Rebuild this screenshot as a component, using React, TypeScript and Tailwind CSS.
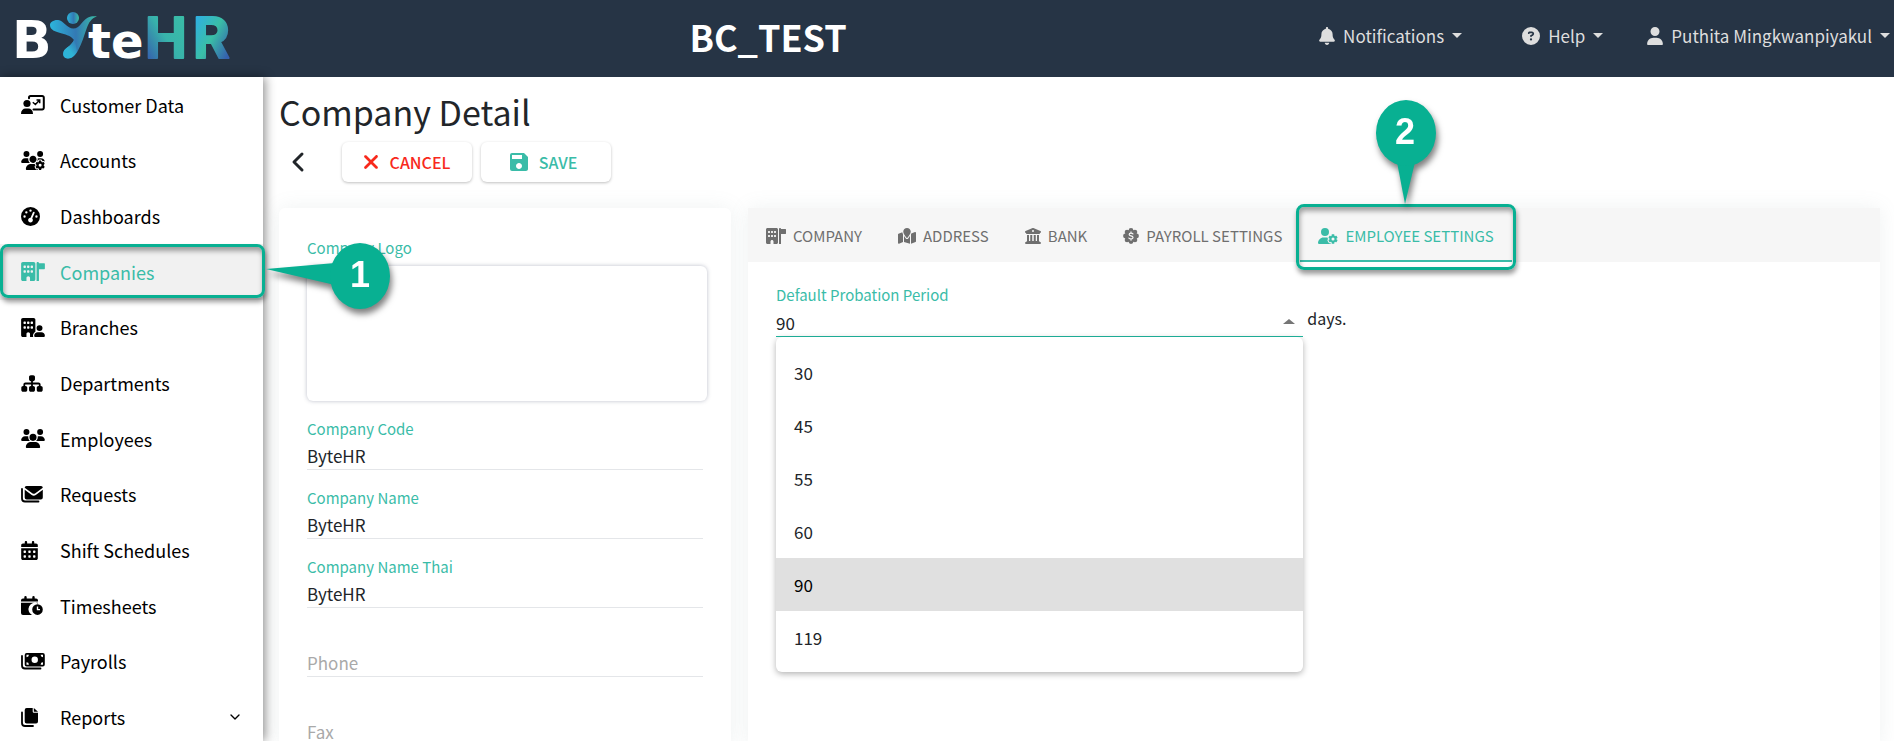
import { useState } from "react";
import type { ReactNode } from "react";
import {
    FaBell,
    FaBuildingColumns,
    FaBuildingFlag,
    FaBuildingUser,
    FaCalendarDays,
    FaCircleQuestion,
    FaGaugeHigh,
    FaMapLocation,
    FaSitemap,
    FaUser,
    FaUserGear,
    FaUsers,
    FaUsersGear,
    FaXmark
} from "react-icons/fa6";
import { MdSave } from "react-icons/md";
import { ChevronDown, ChevronLeft } from "lucide-react";

const navIcon = "h-[19px] w-auto";
const wideNavIcon = "h-[19px] w-6";
const tabIcon = "h-4 w-auto";
const wideTabIcon = "h-4 w-5";

function CustomerIcon() {
    return (
        <svg viewBox="0 0 24 19" className={navIcon} fill="currentColor">
            <path d="M8 3.2V2.6A1.6 1.6 0 0 1 9.600 1H21.200A1.600 1.600 0 0 1 22.800 2.600V12.800A1.600 1.600 0 0 1 21.200 14.400H12.500" fill="none" stroke="currentColor" strokeWidth="2" strokeLinecap="round" />
            <circle cx="6" cy="8.500" r="3.600" />
            <path d="M0 19c0-3.500 2-5.400 4.600-5.400h2.800c2.600 0 4.600 1.900 4.600 5.400z" />
            <path d="M11.800 7.200l2.600 2.300 3.800-4M15.500 5h3.200v3.200" fill="none" stroke="currentColor" strokeWidth="1.500" />
        </svg>
    );
}

function RequestsIcon() {
    return (
        <svg viewBox="0 0 22 19" className={navIcon} fill="currentColor">
            <path d="M1 4v9.500a3 3 0 0 0 3 3h13.500" fill="none" stroke="currentColor" strokeWidth="1.800" strokeLinecap="round" />
            <path d="M5.500 1h14.500a1.800 1.800 0 0 1 1.800 1.800l-7.800 5.600a2 2 0 0 1-2.400 0L3.700 2.800A1.800 1.800 0 0 1 5.500 1z" />
            <path d="M3.700 4.800l7 5.100a3.400 3.400 0 0 0 4.100 0l7-5.100v7.700a2 2 0 0 1-2 2H5.700a2 2 0 0 1-2-2z" />
        </svg>
    );
}

function TimesheetIcon() {
    return (
        <svg viewBox="0 0 22 19" className={navIcon} fill="currentColor">
            <path d="M3.300 1.200a1.200 1.200 0 0 1 2.400 0v1.200h5.600V1.200a1.200 1.200 0 0 1 2.400 0v1.200H15a2 2 0 0 1 2 2v1.200H0V4.400a2 2 0 0 1 2-2h1.300z" />
            <path d="M0 6.800h17v.6a6.400 6.400 0 0 0-6 11.600H2a2 2 0 0 1-2-2z" />
            <path fillRule="evenodd" d="M16.500 8.300a5.300 5.300 0 1 1 0 10.600 5.300 5.300 0 0 1 0-10.600zm-.7 2.300v3.700h3.200v-1.300h-1.800v-2.400z" />
        </svg>
    );
}

function PayrollIcon() {
    return (
        <svg viewBox="0 0 24 19" className={navIcon} fill="currentColor">
            <path d="M1 4v9.500a3 3 0 0 0 3 3h15.500" fill="none" stroke="currentColor" strokeWidth="1.800" strokeLinecap="round" />
            <path fillRule="evenodd" d="M5.700 1h16.100a2 2 0 0 1 2 2v9.500a2 2 0 0 1-2 2H5.700a2 2 0 0 1-2-2V3a2 2 0 0 1 2-2zm8.050 3.600a3.200 3.200 0 1 0 0 6.400 3.200 3.200 0 0 0 0-6.400zM5.500 2.800v2.400a2.400 2.400 0 0 0 2.400-2.400zm16.500 0h-2.400a2.400 2.400 0 0 0 2.400 2.400zM5.500 12.700h2.400a2.400 2.400 0 0 0-2.400-2.400zm16.500 0v-2.400a2.400 2.400 0 0 0-2.400 2.400z" />
        </svg>
    );
}

function ReportsIcon() {
    return (
        <svg viewBox="0 0 17 19" className={navIcon} fill="currentColor">
            <path d="M1 4.500v10.500a3 3 0 0 0 3 3h8" fill="none" stroke="currentColor" strokeWidth="1.800" strokeLinecap="round" />
            <path d="M5.700 0h6v3.500a1.200 1.200 0 0 0 1.200 1.200H17v8.700a2 2 0 0 1-2 2H5.700a2 2 0 0 1-2-2V2a2 2 0 0 1 2-2z" />
            <path d="M12.800 0L17 3.800h-4.200z" />
        </svg>
    );
}

function BadgeDollarIcon() {
    return (
        <svg viewBox="0 0 18 18" className={tabIcon} fill="currentColor">
            <circle cx="9" cy="2.800" r="2.700" />
            <circle cx="9" cy="15.200" r="2.700" />
            <circle cx="2.800" cy="9" r="2.700" />
            <circle cx="15.200" cy="9" r="2.700" />
            <circle cx="4.600" cy="4.600" r="2.700" />
            <circle cx="13.400" cy="4.600" r="2.700" />
            <circle cx="4.600" cy="13.400" r="2.700" />
            <circle cx="13.400" cy="13.400" r="2.700" />
            <circle cx="9" cy="9" r="6.500" />
            <path d="M11.200 6.700C10.600 6 9.900 5.800 9 5.800c-1.300 0-2.100.6-2.100 1.500 0 2.200 4.400 1 4.400 3.400 0 1-.9 1.600-2.200 1.600-1 0-1.900-.3-2.500-1M9 4.400v1.400M9 12.300v1.400" fill="none" stroke="#f6f6f6" strokeWidth="1.300" strokeLinecap="round" />
        </svg>
    );
}

function Logo() {
    return (
        <svg viewBox="0 -11 220 77" className="h-[77px] w-[220px] shrink-0 overflow-visible" role="img" aria-label="ByteHR">
            <defs>
                <linearGradient id="h" x1="0" y1="1" x2="1" y2="0">
                    <stop offset="0.150" stopColor="#3566ad" />
                    <stop offset="0.500" stopColor="#38b3ab" />
                    <stop offset="1" stopColor="#3ac0a6" />
                </linearGradient>
                <linearGradient id="r" x1="0" y1="0" x2="1" y2="1">
                    <stop offset="0.150" stopColor="#2fb0e0" />
                    <stop offset="0.500" stopColor="#3abfa6" />
                    <stop offset="0.850" stopColor="#3560ae" />
                </linearGradient>
                <linearGradient id="y" x1="0" y1="0" x2="1" y2="0">
                    <stop offset="0" stopColor="#2cb5dc" />
                    <stop offset="0.550" stopColor="#3379b4" />
                    <stop offset="1" stopColor="#3abfa6" />
                </linearGradient>
                <linearGradient id="leg" x1="0" y1="1" x2="1" y2="0">
                    <stop offset="0" stopColor="#2cb5dc" />
                    <stop offset="0.450" stopColor="#2fb3d4" />
                    <stop offset="1" stopColor="#3470b0" />
                </linearGradient>
            </defs>
            <g className="font-['DejaVu_Sans'] font-bold" fill="#fff">
                <text x="-5" y="47" fontSize="52">B</text>
                <text x="71" y="47" fontSize="48">te</text>
            </g>
            <g className="font-['Inter'] font-bold" strokeWidth="2" strokeLinejoin="round">
                <text x="128" y="47" fontSize="56" fill="url(#h)" stroke="url(#h)">H</text>
                <text x="176" y="47" fontSize="56" fill="url(#r)" stroke="url(#r)">R</text>
            </g>
            <circle cx="56" cy="7" r="6" fill="url(#y)" />
            <path d="M33 14c0-3 4-5.500 8.300-5 5 .6 9 8.500 15 8.500 7 0 8-7.500 14.700-11C74 5 77 5 80 5.500c-6 2-8 6-10 11-3 8-5 16-9 23-2.500 4.500-6 8-10 8-4 0-5.500-3.500-4.500-6.500 1-4 8-6 10.500-12-3-4-7-5-12-6.500C38 20.500 33 19 33 14z" fill="url(#y)" />
            <path d="M57 29c-2.500 6-9.500 8-10.500 12-1 3 .5 6.500 4.500 6.500s7.500-3.500 9-7c-1-5-1-8-3-11.500z" fill="url(#leg)" />
        </svg>
    );
}

const navItems = [
    { label: "Customer Data", icon: <CustomerIcon /> },
    { label: "Accounts", icon: <FaUsersGear className={wideNavIcon} /> },
    { label: "Dashboards", icon: <FaGaugeHigh size={19} /> },
    { label: "Companies", icon: <FaBuildingFlag className={wideNavIcon} />, active: true },
    { label: "Branches", icon: <FaBuildingUser className={wideNavIcon} /> },
    { label: "Departments", icon: <FaSitemap className="h-[19px] w-[22px]" /> },
    { label: "Employees", icon: <FaUsers className={wideNavIcon} /> },
    { label: "Requests", icon: <RequestsIcon /> },
    { label: "Shift Schedules", icon: <FaCalendarDays className="h-[19px] w-[17px]" /> },
    { label: "Timesheets", icon: <TimesheetIcon /> },
    { label: "Payrolls", icon: <PayrollIcon /> },
    { label: "Reports", icon: <ReportsIcon />, expandable: true }
];

const tabs = [
    { label: "COMPANY", icon: <FaBuildingFlag className={wideTabIcon} /> },
    { label: "ADDRESS", icon: <FaMapLocation className="h-4 w-[18px]" /> },
    { label: "BANK", icon: <FaBuildingColumns size={16} /> },
    { label: "PAYROLL SETTINGS", icon: <BadgeDollarIcon /> },
    { label: "EMPLOYEE SETTINGS", icon: <FaUserGear className={wideTabIcon} />, active: true }
];

const fields = [
    { id: "code", label: "Company Code", value: "ByteHR" },
    { id: "name", label: "Company Name", value: "ByteHR" },
    { id: "name-thai", label: "Company Name Thai", value: "ByteHR" },
    { id: "phone", label: "Phone", value: "" },
    { id: "fax", label: "Fax", value: "" }
];

const periods = ["30", "45", "55", "60", "90", "119"];

function Highlight() {
    return (
        <span className="pointer-events-none absolute inset-0 rounded-lg border-3 border-[#08b092] shadow-[1px_4px_5px_rgba(0,0,0,0.4),inset_1px_4px_5px_rgba(0,0,0,0.35)]" />
    );
}

function HeaderMenu({ icon, label }: { icon: ReactNode; label: string }) {
    return (
        <button className="flex items-center gap-2">
            {icon}
            <span>{label}</span>
            <span className="border-x-5 border-t-5 border-x-transparent border-t-current" />
        </button>
    );
}

function Sidebar() {
    return (
        <aside className="relative z-10 w-[263px] shrink-0 bg-white shadow-[2px_0_10px_rgba(0,0,0,0.45)]">
            <nav className="grid h-[calc(100%+4px)] auto-rows-fr">
                {navItems.map((item) => (
                    <a
                        key={item.label}
                        href="#"
                        className={
                            item.active
                                ? "relative flex items-center bg-[#f1f1f1] pl-[21px] text-lg text-[#3abca8]"
                                : "flex items-center pl-[21px] text-lg text-black"
                        }
                    >
                        <span className="w-[39px]">{item.icon}</span>
                        {item.label}
                        {item.expandable && <ChevronDown size={16} className="mr-5 ml-auto" />}
                        {item.active && (
                            <>
                                <span className="absolute -right-0.5 bottom-0.5 left-0 top-0">
                                    <Highlight />
                                </span>
                                <svg viewBox="0 0 128 80" className="absolute left-full -top-1 h-20 w-32 overflow-visible drop-shadow-[2px_5px_3px_rgba(0,0,0,0.5)]">
                                    <path d="M3 29L72 23V45z" fill="#08b092" />
                                    <ellipse cx="97" cy="36" rx="30" ry="33" fill="#08b092" />
                                    <text x="97" y="47" textAnchor="middle" fill="#fff" className="font-['Liberation_Sans'] text-4xl font-bold">1</text>
                                </svg>
                            </>
                        )}
                    </a>
                ))}
            </nav>
        </aside>
    );
}

function CompanyCard() {
    return (
        <section className="rounded-md bg-white px-7 pt-7 shadow-[0_0_20px_rgba(120,150,150,0.12)]">
            <p className="text-[15px] leading-6 text-[#3abca8]">Company Logo</p>
            <div className="-mr-1 mt-1.5 h-[135px] rounded-md shadow-[0_0_4px_rgba(60,70,100,0.35)]" />
            {fields.map((field) => (
                <div key={field.id} className="flex h-[69px] flex-col justify-end border-b border-[#e4e6e9]">
                    {field.value && (
                        <label htmlFor={field.id} className="text-[15px] leading-6 text-[#3abca8]">
                            {field.label}
                        </label>
                    )}
                    <input
                        id={field.id}
                        aria-label={field.label}
                        defaultValue={field.value}
                        placeholder={field.value ? undefined : field.label}
                        className="h-7 w-full bg-transparent text-[17px] text-[#212529] outline-none placeholder:text-[#a9a9a9]"
                    />
                </div>
            ))}
        </section>
    );
}

function SettingsCard() {
    const [period, setPeriod] = useState("90");

    return (
        <section className="rounded-sm bg-white shadow-[0_0_20px_rgba(120,150,150,0.12)]">
            <div role="tablist" className="flex h-[54px] bg-[#f6f6f6]">
                {tabs.map((tab) => (
                    <button
                        key={tab.label}
                        role="tab"
                        aria-selected={!!tab.active}
                        className={
                            tab.active
                                ? "relative flex items-center gap-[7px] border-b-2 border-[#3abca8] px-[18px] pt-1 text-[15px] text-[#3abca8]"
                                : "flex items-center gap-[7px] border-b-2 border-transparent px-[18px] pt-1 text-[15px] text-[#6f6f6f]"
                        }
                    >
                        {tab.icon}
                        <span>{tab.label}</span>
                        {tab.active && (
                            <>
                                <span className="absolute -inset-x-1 -top-1 -bottom-2.5">
                                    <Highlight />
                                </span>
                                <svg viewBox="0 0 64 106" className="absolute bottom-full left-1/2 h-[106px] w-16 -translate-x-1/2 overflow-visible drop-shadow-[2px_5px_3px_rgba(0,0,0,0.5)]">
                                    <path d="M23 60H41L31 102z" fill="#08b092" />
                                    <ellipse cx="32" cy="31" rx="30" ry="33" fill="#08b092" />
                                    <text x="31" y="42" textAnchor="middle" fill="#fff" className="font-['Liberation_Sans'] text-4xl font-bold">2</text>
                                </svg>
                            </>
                        )}
                    </button>
                ))}
            </div>
            <div className="flex items-center px-7 pt-[21px]">
                <div className="relative w-[49%]">
                    <label htmlFor="probation" className="block text-[15px] leading-6 text-[#3abca8]">
                        Default Probation Period
                    </label>
                    <div className="flex items-center border-b border-[#20b8a0] pr-2">
                        <select
                            id="probation"
                            value={period}
                            onChange={(e) => setPeriod(e.target.value)}
                            className="h-[29px] flex-1 appearance-none bg-transparent pt-0.5 text-[17px] text-[#212529] outline-none"
                        >
                            {periods.map((p) => (
                                <option key={p}>{p}</option>
                            ))}
                        </select>
                        <span className="border-x-6 border-b-5 border-x-transparent border-b-[#757575]" />
                    </div>
                    <ul role="listbox" className="absolute inset-x-0 top-full rounded-md bg-white pt-[9px] pb-2 shadow-[0_2px_6px_rgba(0,0,0,0.3)]">
                        {periods.map((p) => (
                            <li
                                key={p}
                                role="option"
                                aria-selected={p === period}
                                onClick={() => setPeriod(p)}
                                className={
                                    p === period
                                        ? "flex h-[53px] items-center bg-[#e0e0e0] px-[18px] text-[17px] text-black"
                                        : "flex h-[53px] items-center px-[18px] text-[17px] text-[#212529]"
                                }
                            >
                                {p}
                            </li>
                        ))}
                    </ul>
                </div>
                <span className="pt-4 pl-1 text-base text-[#212529]">days.</span>
            </div>
        </section>
    );
}

export default function App() {
    return (
        <div className="flex h-screen flex-col overflow-hidden bg-white font-['Noto_Sans_CJK_JP',sans-serif]">
            <header className="flex h-[77px] shrink-0 items-center justify-between bg-[#263445] pr-1 pl-[17px]">
                <Logo />
                <h1 className="mr-5 pb-1.5 text-4xl font-bold text-white">BC_TEST</h1>
                <div className="flex items-center gap-11 pb-1.5 text-[17px] text-[#dedede]">
                    <div className="mr-4">
                        <HeaderMenu icon={<FaBell className="h-[18px] w-4" />} label="Notifications" />
                    </div>
                    <HeaderMenu icon={<FaCircleQuestion size={18} />} label="Help" />
                    <HeaderMenu icon={<FaUser className="h-[18px] w-4" />} label="Puthita Mingkwanpiyakul" />
                </div>
            </header>
            <div className="flex min-h-0 flex-1">
                <Sidebar />
                <main className="flex min-w-0 flex-1 flex-col pr-3.5 pl-4">
                    <h2 className="pt-2.5 text-[34px] leading-[50px] text-[#212529]">Company Detail</h2>
                    <div className="mt-[5px] flex h-10 items-center gap-[9px]">
                        <button aria-label="Back" className="mr-3.5 flex w-10 justify-center pr-0.5 text-[#212529]">
                            <ChevronLeft size={32} strokeWidth={2.250} />
                        </button>
                        <button className="flex h-10 w-[130px] items-center justify-center gap-2 rounded-md bg-white pr-1 text-base font-medium text-[#f8291c] shadow-[0_1px_3px_rgba(0,0,0,0.25)]">
                            <FaXmark size={22} />
                            CANCEL
                        </button>
                        <button className="flex h-10 w-[130px] items-center justify-center gap-2 rounded-md bg-white pr-2 text-base font-medium text-[#3abca8] shadow-[0_1px_3px_rgba(0,0,0,0.25)]">
                            <MdSave size={24} />
                            SAVE
                        </button>
                    </div>
                    <div className="mt-[26px] grid min-h-0 flex-1 grid-cols-[452fr_1132fr] gap-[17px]">
                        <CompanyCard />
                        <SettingsCard />
                    </div>
                </main>
            </div>
        </div>
    );
}
